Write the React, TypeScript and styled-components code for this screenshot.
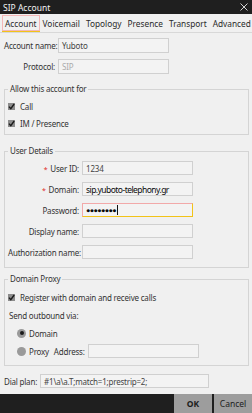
import React from "react";
import styled, { createGlobalStyle } from "styled-components";

const Global = createGlobalStyle`
  html, body { margin: 0; padding: 0; background: #f0f0f0; }
  body { font-family: "Noto Sans", "Open Sans", sans-serif; }
  * { box-sizing: border-box; }
`;

const Window = styled.div`
  width: 252px;
  height: 413px;
  display: flex;
  flex-direction: column;
  background: #f0f0f0;
  overflow: hidden;
  font-family: "Noto Sans", "Open Sans", sans-serif;
  font-size: 8px;
  letter-spacing: -0.2px;
  color: #333;
`;

const TitleBar = styled.div`
  height: 14px;
  flex: none;
  background: #1f1f1f;
  color: #f2f2f2;
  display: flex;
  align-items: center;
  justify-content: space-between;
  padding: 0 4px 0 3px;
  font-size: 8.5px;
  letter-spacing: 0;
`;

const CloseIcon = styled.svg`
  width: 8px;
  height: 8px;
`;

const TabBar = styled.div`
  height: 19px;
  flex: none;
  display: flex;
  align-items: flex-start;
  padding: 1px 0 0 2px;
  border-bottom: 1px solid #d8d8d8;
  white-space: nowrap;
  overflow: hidden;
`;

const Tab = styled.div<{ $active?: boolean }>`
  height: 16px;
  display: flex;
  align-items: center;
  padding: 0 2px;
  font-size: 8.3px;
  letter-spacing: 0;
  color: #2a2a2a;
  border: 1px solid ${(p) => (p.$active ? "#f3b7b7" : "transparent")};
  box-shadow: ${(p) => (p.$active ? "0 2px 0 #f2c318" : "none")};
`;

const Content = styled.div`
  display: flex;
  flex-direction: column;
  padding: 0 3px 0 4px;
`;

const Row = styled.div<{ $mt?: number; $h?: number }>`
  display: flex;
  align-items: center;
  gap: 3px;
  margin-top: ${(p) => p.$mt ?? 0}px;
  height: ${(p) => p.$h ?? 15}px;
`;

const Label = styled.div<{ $w: number }>`
  width: ${(p) => p.$w}px;
  flex: none;
  text-align: right;
  white-space: nowrap;
  color: #333;
`;

const Req = styled.span`
  color: #e0281e;
  font-size: 7px;
  margin-right: 3px;
`;

const Field = styled.div<{
  $w: number;
  $h?: number;
  $tone?: "normal" | "muted" | "strong" | "dots";
  $focus?: boolean;
}>`
  width: ${(p) => p.$w}px;
  height: ${(p) => p.$h ?? 15}px;
  flex: none;
  display: flex;
  align-items: center;
  padding: 0 3px;
  background: #f3f3f3;
  border: 1px solid #d0d0d0;
  border-color: ${(p) =>
    p.$focus ? "#f2a9a9 #f2c318 #f2c318 #f2a9a9" : "#d0d0d0"};
  white-space: nowrap;
  overflow: hidden;
  font-size: ${(p) => (p.$tone === "dots" ? "7.2px" : p.$tone === "strong" ? "8.5px" : "8px")};
  letter-spacing: ${(p) => (p.$tone === "strong" ? "-0.55px" : p.$tone === "dots" ? "-0.6px" : "-0.2px")};
  color: ${(p) =>
    p.$tone === "muted" ? "#ababab" : p.$tone === "strong" || p.$tone === "dots" ? "#0a0a0a" : "#444"};
`;

const Caret = styled.span`
  display: inline-block;
  width: 1px;
  height: 10px;
  background: #111;
  margin-left: 1px;
`;

const Group = styled.fieldset<{ $mt: number; $pb: number }>`
  margin: ${(p) => p.$mt}px 0 0;
  padding: 0 4px ${(p) => p.$pb}px 3px;
  border: 1px solid #d4d4d4;
  min-width: 0;
  display: flex;
  flex-direction: column;
`;

const Legend = styled.legend`
  padding: 0 2px;
  margin: 0;
  font-size: 8px;
  line-height: 12px;
  color: #333;
`;

const CheckRow = styled.div<{ $mt?: number; $h: number }>`
  display: flex;
  align-items: center;
  gap: 5px;
  height: ${(p) => p.$h}px;
  margin-top: ${(p) => p.$mt ?? 0}px;
  color: #333;
`;

const Box = styled.span`
  width: 7px;
  height: 7px;
  background: #8c8c8c;
  display: flex;
  align-items: center;
  justify-content: center;
  flex: none;
`;

const Radio = styled.span<{ $on?: boolean }>`
  width: 9px;
  height: 9px;
  border-radius: 50%;
  background: #9a9a9a;
  margin-left: 9px;
  flex: none;
  display: flex;
  align-items: center;
  justify-content: center;
  &::after {
    content: "";
    width: 4px;
    height: 4px;
    border-radius: 50%;
    background: ${(p) => (p.$on ? "#1a1a1a" : "transparent")};
  }
`;

const RadioRow = styled.div<{ $h: number }>`
  display: flex;
  align-items: center;
  gap: 3px;
  height: ${(p) => p.$h}px;
  color: #333;
`;

const Plain = styled.div<{ $h: number }>`
  height: ${(p) => p.$h}px;
  display: flex;
  align-items: center;
  padding-left: 1px;
  color: #333;
`;

const BottomBar = styled.div`
  margin-top: auto;
  height: 19px;
  flex: none;
  background: #1f1f1f;
  display: flex;
  justify-content: flex-end;
  gap: 2px;
`;

const Button = styled.div<{ $primary?: boolean }>`
  width: 38px;
  height: 19px;
  background: #9d9d9d;
  color: #1c1c1c;
  display: flex;
  align-items: center;
  justify-content: center;
  font-size: 8.5px;
  letter-spacing: 0;
  font-weight: ${(p) => (p.$primary ? 700 : 400)};
`;

const Check = () => (
  <svg width="7" height="7" viewBox="0 0 7 7">
    <path d="M1 3.6 L2.8 5.6 L6.2 1" fill="none" stroke="#1a1a1a" strokeWidth="1.4" />
  </svg>
);

export default function App() {
  return (
    <>
      <Global />
      <Window>
        <TitleBar>
          <span>SIP Account</span>
          <CloseIcon viewBox="0 0 8 8">
            <path d="M0.5 0.5 L7.5 7.5 M7.5 0.5 L0.5 7.5" stroke="#e6e6e6" strokeWidth="0.9" />
          </CloseIcon>
        </TitleBar>
        <TabBar>
          <Tab $active>Account</Tab>
          <Tab>Voicemail</Tab>
          <Tab>Topology</Tab>
          <Tab>Presence</Tab>
          <Tab>Transport</Tab>
          <Tab>Advanced</Tab>
        </TabBar>
        <Content>
          <Row $mt={5}>
            <Label $w={51}>Account name:</Label>
            <Field $w={111}>Yuboto</Field>
          </Row>
          <Row $mt={6}>
            <Label $w={51}>Protocol:</Label>
            <Field $w={111} $tone="muted">SIP</Field>
          </Row>

          <Group $mt={9} $pb={2}>
            <Legend>Allow this account for</Legend>
            <CheckRow $h={17} $mt={3}>
              <Box><Check /></Box>
              Call
            </CheckRow>
            <CheckRow $h={17}>
              <Box><Check /></Box>
              IM / Presence
            </CheckRow>
          </Group>

          <Group $mt={10} $pb={8}>
            <Legend>User Details</Legend>
            <Row $mt={4} $h={14}>
              <Label $w={71}><Req>*</Req>User ID:</Label>
              <Field $w={111} $h={14}>1234</Field>
            </Row>
            <Row $mt={7} $h={14}>
              <Label $w={71}><Req>*</Req>Domain:</Label>
              <Field $w={111} $h={14} $tone="strong">sip.yuboto-telephony.gr</Field>
            </Row>
            <Row $mt={7} $h={14}>
              <Label $w={71}>Password:</Label>
              <Field $w={111} $h={14} $tone="dots" $focus>
                ●●●●●●●●<Caret />
              </Field>
            </Row>
            <Row $mt={7} $h={14}>
              <Label $w={71}>Display name:</Label>
              <Field $w={111} $h={14} />
            </Row>
            <Row $mt={7} $h={14}>
              <Label $w={71}>Authorization name:</Label>
              <Field $w={111} $h={14} />
            </Row>
          </Group>

          <Group $mt={5} $pb={5}>
            <Legend>Domain Proxy</Legend>
            <CheckRow $h={18} $mt={3}>
              <Box><Check /></Box>
              Register with domain and receive calls
            </CheckRow>
            <Plain $h={18}>Send outbound via:</Plain>
            <RadioRow $h={18}>
              <Radio $on />
              Domain
            </RadioRow>
            <RadioRow $h={18}>
              <Radio />
              Proxy
              <span>&nbsp;Address:</span>
              <Field $w={111} $h={14} />
            </RadioRow>
          </Group>

          <Row $mt={8} $h={14}>
            <span>Dial plan:</span>
            <Field $w={169} $h={14}>#1\a\a.T;match=1;prestrip=2;</Field>
          </Row>
        </Content>
        <BottomBar>
          <Button $primary>OK</Button>
          <Button>Cancel</Button>
        </BottomBar>
      </Window>
    </>
  );
}
